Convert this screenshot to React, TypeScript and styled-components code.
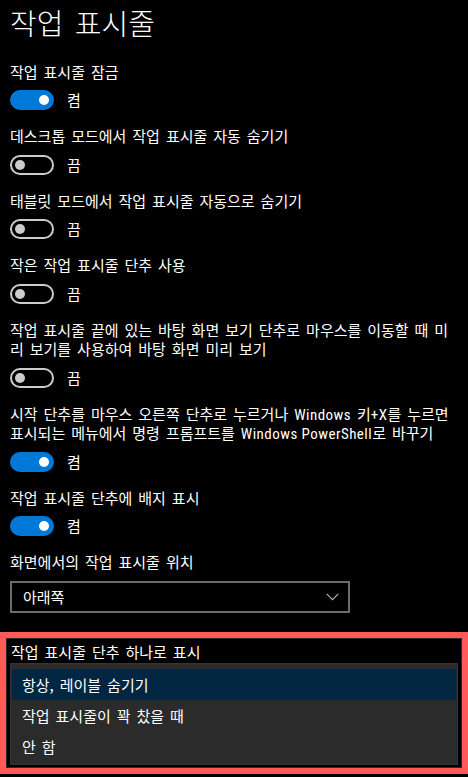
import React from "react";
import styled, { createGlobalStyle } from "styled-components";

const Global = createGlobalStyle`
  html, body {
    margin: 0;
    padding: 0;
    background: #000;
  }
  body {
    font-family: "Noto Sans CJK KR", "Noto Sans", sans-serif;
    color: #fff;
  }
`;

const Page = styled.div`
  width: 468px;
  min-height: 777px;
  box-sizing: border-box;
  padding-top: 4px;
  background: #000;
  display: flex;
  flex-direction: column;
`;

const Title = styled.h1`
  margin: 0 10px;
  font-size: 29px;
  line-height: 36px;
  font-weight: 300;
  word-spacing: 5px;
  color: #fff;
`;

const Settings = styled.div`
  display: flex;
  flex-direction: column;
  padding: 0 10px;
  margin-top: 21.5px;
`;

const Group = styled.div<{ $first?: boolean }>`
  display: flex;
  flex-direction: column;
  margin-top: ${(p) => (p.$first ? "0" : "16px")};
`;

const Label = styled.div`
  font-size: 15px;
  line-height: 19.5px;
  word-spacing: 2.6px;
  color: #fff;
  white-space: nowrap;
`;

const Latin = styled.span`
  font-family: "Liberation Sans Narrow", "Roboto Condensed", "DejaVu Sans Condensed", "Noto Sans CJK KR", sans-serif;
  font-stretch: condensed;
  letter-spacing: 0.45px;
  word-spacing: 0;
  line-height: 0;
`;

const ToggleRow = styled.div`
  display: flex;
  align-items: center;
  gap: 13px;
  margin-top: 9px;
  height: 20px;
`;

const Track = styled.span<{ $on: boolean }>`
  box-sizing: border-box;
  width: 44px;
  height: 20px;
  border-radius: 10px;
  border: 2px solid ${(p) => (p.$on ? "#0078d7" : "#cccccc")};
  background: ${(p) => (p.$on ? "#0078d7" : "transparent")};
  padding: 0 3px;
  display: flex;
  align-items: center;
  justify-content: ${(p) => (p.$on ? "flex-end" : "flex-start")};
`;

const Knob = styled.span<{ $on: boolean }>`
  width: 10px;
  height: 10px;
  border-radius: 50%;
  background: ${(p) => (p.$on ? "#ffffff" : "#cccccc")};
`;

const StateText = styled.span`
  font-size: 15px;
  line-height: 20px;
  color: #fff;
`;

const Select = styled.div`
  box-sizing: border-box;
  margin-top: 9.5px;
  width: 340px;
  height: 32px;
  border: 2px solid #6b6b6b;
  display: flex;
  align-items: center;
  justify-content: space-between;
  padding: 0 9px 0 11px;
  font-size: 15px;
  line-height: 20px;
  color: #fff;
`;

const Highlight = styled.section`
  box-sizing: border-box;
  margin-top: 19px;
  width: 468px;
  border: 6px solid #ff5a5a;
  box-shadow: inset 0 0 0 1px #2a2a2a;
  display: flex;
  flex-direction: column;
  padding: 4px 4px 3px 4px;
`;

const HighlightLabel = styled.div`
  padding-left: 1px;
  font-size: 15px;
  line-height: 20px;
  word-spacing: 2.6px;
  color: #fff;
`;

const Popup = styled.div`
  box-sizing: border-box;
  margin-top: 1px;
  background: #2b2b2b;
  border: 1px solid #353535;
  padding: 5px 1px 2px 1px;
  display: flex;
  flex-direction: column;
`;

const Option = styled.div<{ $selected?: boolean }>`
  height: 31px;
  display: flex;
  align-items: center;
  padding-left: 10px;
  font-size: 15px;
  line-height: 20px;
  word-spacing: 2.6px;
  color: #fff;
  background: ${(p) => (p.$selected ? "#002642" : "transparent")};
`;

const Chevron = () => (
  <svg width="13" height="8" viewBox="0 0 13 8" fill="none">
    <path d="M0.7 0.9 L6.5 6.6 L12.3 0.9" stroke="#b0b0b0" strokeWidth="1.2" />
  </svg>
);

type Item = { lines: React.ReactNode[]; on: boolean };

const items: Item[] = [
  { lines: ["작업 표시줄 잠금"], on: true },
  { lines: ["데스크톱 모드에서 작업 표시줄 자동 숨기기"], on: false },
  { lines: ["태블릿 모드에서 작업 표시줄 자동으로 숨기기"], on: false },
  { lines: ["작은 작업 표시줄 단추 사용"], on: false },
  {
    lines: [
      "작업 표시줄 끝에 있는 바탕 화면 보기 단추로 마우스를 이동할 때 미",
      "리 보기를 사용하여 바탕 화면 미리 보기",
    ],
    on: false,
  },
  {
    lines: [
      <>
        시작 단추를 마우스 오른쪽 단추로 누르거나 <Latin>Windows</Latin> 키<Latin>+X</Latin>를 누르면
      </>,
      <>
        표시되는 메뉴에서 명령 프롬프트를 <Latin>Windows PowerShell</Latin>로 바꾸기
      </>,
    ],
    on: true,
  },
  { lines: ["작업 표시줄 단추에 배지 표시"], on: true },
];

const Toggle = ({ on }: { on: boolean }) => (
  <ToggleRow>
    <Track $on={on}>
      <Knob $on={on} />
    </Track>
    <StateText>{on ? "켬" : "끔"}</StateText>
  </ToggleRow>
);

export default function App() {
  return (
    <>
      <Global />
      <Page>
        <Title>작업 표시줄</Title>
        <Settings>
          {items.map((it, i) => (
            <Group key={i} $first={i === 0}>
              <Label>
                {it.lines.map((l, j) => (
                  <React.Fragment key={j}>
                    {j > 0 && <br />}
                    {l}
                  </React.Fragment>
                ))}
              </Label>
              <Toggle on={it.on} />
            </Group>
          ))}
          <Group>
            <Label>화면에서의 작업 표시줄 위치</Label>
            <Select>
              <span>아래쪽</span>
              <Chevron />
            </Select>
          </Group>
        </Settings>
        <Highlight>
          <HighlightLabel>작업 표시줄 단추 하나로 표시</HighlightLabel>
          <Popup>
            <Option $selected>항상, 레이블 숨기기</Option>
            <Option>작업 표시줄이 꽉 찼을 때</Option>
            <Option>안 함</Option>
          </Popup>
        </Highlight>
      </Page>
    </>
  );
}
